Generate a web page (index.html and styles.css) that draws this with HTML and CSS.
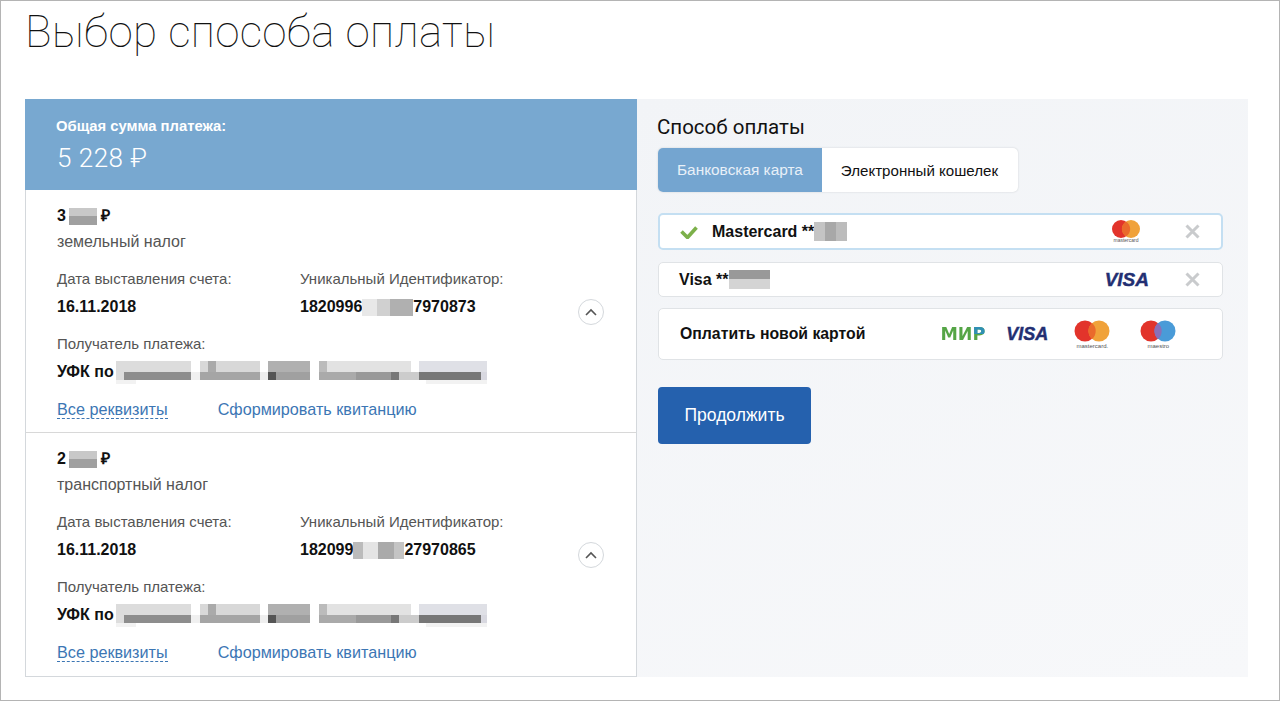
FILE: index.html
```html
<!DOCTYPE html>
<html>
<head>
  <title>Выбор способа оплаты</title>
  <link rel="stylesheet" href="styles.css">
</head>
<body>
  <div class="page">
    <h1 class="page-title">Выбор способа оплаты</h1>
    <div class="panel">
      <div class="bills">
        <div class="total">
          <div class="total-label">Общая сумма платежа:</div>
          <div class="total-sum">5 228 ₽</div>
        </div>

        <div class="bill">
          <div class="bill-sum">3 <span class="pix pix-sum"></span> ₽</div>
          <div class="bill-type">земельный налог</div>
          <div class="bill-fields">
            <div>
              <div class="field-label">Дата выставления счета:</div>
              <div class="field-value">16.11.2018</div>
            </div>
            <div>
              <div class="field-label">Уникальный Идентификатор:</div>
              <div class="field-value">1820996<span class="pix pix-id"></span>7970873</div>
            </div>
            <button class="toggle">
              <svg width="12" height="8" viewBox="0 0 12 8"><path d="M1 7l5-5 5 5" fill="none" stroke="#555" stroke-width="1.6"/></svg>
            </button>
          </div>
          <div class="field-label receiver-label">Получатель платежа:</div>
          <div class="field-value receiver">УФК по <span class="pix pix-long"></span></div>
          <div class="bill-links">
            <a class="link link-dashed">Все реквизиты</a>
            <a class="link">Сформировать квитанцию</a>
          </div>
        </div>

        <div class="bill">
          <div class="bill-sum">2 <span class="pix pix-sum"></span> ₽</div>
          <div class="bill-type">транспортный налог</div>
          <div class="bill-fields">
            <div>
              <div class="field-label">Дата выставления счета:</div>
              <div class="field-value">16.11.2018</div>
            </div>
            <div>
              <div class="field-label">Уникальный Идентификатор:</div>
              <div class="field-value">182099<span class="pix pix-id pix-id-wide"></span>27970865</div>
            </div>
            <button class="toggle">
              <svg width="12" height="8" viewBox="0 0 12 8"><path d="M1 7l5-5 5 5" fill="none" stroke="#555" stroke-width="1.6"/></svg>
            </button>
          </div>
          <div class="field-label receiver-label">Получатель платежа:</div>
          <div class="field-value receiver">УФК по <span class="pix pix-long"></span></div>
          <div class="bill-links">
            <a class="link link-dashed">Все реквизиты</a>
            <a class="link">Сформировать квитанцию</a>
          </div>
        </div>
      </div>

      <div class="method">
        <h2 class="method-title">Способ оплаты</h2>
        <div class="tabs">
          <div class="tab tab-active">Банковская карта</div>
          <div class="tab">Электронный кошелек</div>
        </div>

        <div class="card card-selected">
          <svg class="check" width="18" height="14" viewBox="0 0 18 14"><path d="M1.5 6.5l6 6 9-10" fill="none" stroke="#7cb04a" stroke-width="3.6"/></svg>
          <span class="card-name">Mastercard **<span class="pix pix-card"></span></span>
          <span class="logo logo-mc-small">
            <svg width="28" height="18" viewBox="0 0 28 18">
              <circle cx="9" cy="9" r="9" fill="#e2342b"/>
              <circle cx="19" cy="9" r="9" fill="#f0a23a"/>
              <path d="M14 1.4a9 9 0 0 1 0 15.2a9 9 0 0 1 0-15.2z" fill="#ea6a2c"/>
            </svg>
            <span class="logo-caption logo-caption-small">mastercard</span>
          </span>
          <svg class="remove" width="15" height="15" viewBox="0 0 15 15"><path d="M1.5 1.5l12 12M13.5 1.5l-12 12" stroke="#c9cbcd" stroke-width="3"/></svg>
        </div>

        <div class="card card-visa">
          <span class="card-name">Visa **<span class="pix pix-card pix-card-visa"></span></span>
          <span class="visa visa-small">VISA</span>
          <svg class="remove" width="15" height="15" viewBox="0 0 15 15"><path d="M1.5 1.5l12 12M13.5 1.5l-12 12" stroke="#c9cbcd" stroke-width="3"/></svg>
        </div>

        <div class="card card-new">
          <span class="card-name card-name-new">Оплатить новой картой</span>
          <span class="new-logos">
            <span class="mir">МИР</span>
            <span class="visa">VISA</span>
            <span class="logo">
              <svg width="36" height="22" viewBox="0 0 36 22">
                <circle cx="11" cy="11" r="10.5" fill="#e2342b"/>
                <circle cx="25" cy="11" r="10.5" fill="#f0a23a"/>
                <path d="M18 3a10.5 10.5 0 0 1 0 16a10.5 10.5 0 0 1 0-16z" fill="#ea6a2c"/>
              </svg>
              <span class="logo-caption">mastercard.</span>
            </span>
            <span class="logo">
              <svg width="36" height="22" viewBox="0 0 36 22">
                <circle cx="11" cy="11" r="10.5" fill="#e2342b"/>
                <circle cx="25" cy="11" r="10.5" fill="#4a9bd8"/>
                <path d="M18 3a10.5 10.5 0 0 1 0 16a10.5 10.5 0 0 1 0-16z" fill="#8a6fb8"/>
              </svg>
              <span class="logo-caption">maestro</span>
            </span>
          </span>
        </div>

        <button class="continue-btn">Продолжить</button>
      </div>
    </div>
  </div>
</body>
</html>
```

FILE: styles.css
```css
html, body {
  margin: 0;
  background-color: #fff;
}

.page {
  box-sizing: border-box;
  width: 1280px;
  height: 701px;
  border: 1px solid #b4b4b4;
  padding: 0 31px 0 24px;
  overflow: hidden;
  font-family: "Liberation Sans", Arial, sans-serif;
  color: #111;
}

.page-title {
  margin: 0;
  height: 98px;
  font-family: Roboto, sans-serif;
  font-weight: 100;
  font-size: 44px;
  line-height: 62px;
  letter-spacing: 0.3px;
  color: #111;
}

.panel {
  display: flex;
  height: 578px;
}

/* left column */
.bills {
  box-sizing: border-box;
  width: 612px;
  border: 1px solid #d4d8dc;
  border-top: none;
}

.total {
  box-sizing: border-box;
  height: 91px;
  margin: 0 -1px;
  padding: 19px 0 0 31px;
  background-color: #78a8d0;
  color: #fff;
}

.total-label {
  font-size: 14.8px;
  font-weight: bold;
  line-height: 16px;
}

.total-sum {
  margin-top: 9px;
  padding-left: 1px;
  font-family: Roboto, sans-serif;
  font-weight: 300;
  font-size: 26px;
  line-height: 30px;
  letter-spacing: 0.5px;
}

.bill {
  box-sizing: border-box;
  height: 243px;
  padding: 17px 0 0 31px;
  border-bottom: 1px solid #d8d8d8;
}

.bill:last-child {
  border-bottom: none;
  height: 244px;
}

.bill-sum {
  font-size: 16px;
  font-weight: bold;
  line-height: 18px;
  word-spacing: -1px;
}

.bill-type {
  margin-top: 8px;
  font-size: 16px;
  line-height: 18px;
  color: #555;
}

.bill-fields {
  display: grid;
  grid-template-columns: 243px 278px 26px;
  margin-top: 19px;
}

.field-label {
  font-size: 15px;
  line-height: 18px;
  color: #555;
}

.field-value {
  margin-top: 10px;
  font-size: 16px;
  font-weight: bold;
  line-height: 18px;
  white-space: nowrap;
}

.toggle {
  align-self: end;
  width: 26px;
  height: 26px;
  margin: 0 0 -9px 0;
  padding: 0;
  border: 1px solid #d4d8dc;
  border-radius: 50%;
  background-color: #fff;
  display: flex;
  align-items: center;
  justify-content: center;
}

.receiver-label {
  margin-top: 19px;
}

.receiver {
  margin-top: 8px;
}

.bill-links {
  display: flex;
  gap: 50px;
  margin-top: 16px;
}

.link {
  font-size: 16.2px;
  line-height: 18px;
  color: #3c76b4;
}

.link-dashed {
  border-bottom: 1px dashed #3c76b4;
}

/* pixelated pieces */
.pix {
  display: inline-block;
  vertical-align: -4px;
  height: 17px;
  filter: blur(0.5px);
}

.pix-sum {
  width: 28px;
  background: linear-gradient(#c8c8c8 0 45%, #a0a0a0 45% 100%);
}

.pix-id {
  width: 51px;
  background:
    linear-gradient(to right, #e8e8e8 0 30%, #d0d0d0 30% 55%, #b0b0b0 55% 100%);
}

.pix-id-wide {
  background:
    linear-gradient(to right, #bbb 0 20%, #e4e4e4 20% 50%, #aaa 50% 80%, #c4c4c4 80% 100%);
}

.pix-long {
  width: 371px;
  height: 23px;
  margin-left: -2px;
  vertical-align: -7px;
  background:
    linear-gradient(to right, #dcdcdc 0 75px, #fff 75px 84px, #d8d8d8 84px 92px, #aaa 92px 100px, #d8d8d8 100px 144px, #fff 144px 152px, #b0b0b0 152px 194px, #fff 194px 203px, #bbb 203px 211px, #e2e2e2 211px 295px, #fff 295px 303px, #dfe0e6 303px 371px) 0 0 / 100% 11px no-repeat,
    linear-gradient(to right, #ddd 0 8px, #8d8d8d 8px 75px, #f0f0f0 75px 84px, #a5a5a5 84px 144px, #eee 144px 152px, #555 152px 160px, #a0a0a0 160px 194px, #fff 194px 203px, #aaa 203px 240px, #999 240px 275px, #777 275px 283px, #ccc 283px 303px, #777 303px 365px, #d8d8e0 365px 371px) 0 11px / 100% 8px no-repeat,
    linear-gradient(to right, #f2f2f2 0 20px, #fff 20px 310px, #f2f2f2 310px 371px) 0 19px / 100% 4px no-repeat;
}

.pix-card {
  width: 33px;
  height: 19px;
  vertical-align: -4px;
  background: linear-gradient(to right, #c4c4c4 0 33%, #a8a8a8 33% 66%, #bcbcbc 66% 100%);
}

.pix-card-visa {
  width: 41px;
  background: linear-gradient(#999 0 50%, #d4d4d4 50% 100%);
}

/* right column */
.method {
  flex: 1;
  padding: 14px 25px 0 21px;
  background: linear-gradient(160deg, #f2f4f7, #f7f8fa);
}

.method-title {
  margin: 0 0 0 -1px;
  height: 35px;
  font-family: Roboto, sans-serif;
  font-weight: 400;
  font-size: 20.5px;
  line-height: 28px;
  color: #111;
}

.tabs {
  display: inline-flex;
  height: 44px;
  border-radius: 5px;
  background-color: #fff;
  box-shadow: 0 0 2px #c8ccd0;
  overflow: hidden;
}

.tab {
  display: flex;
  align-items: center;
  padding: 0 20px 0 19px;
  font-size: 15.1px;
  color: #111;
}

.tab-active {
  padding: 0 19px;
  font-size: 15.4px;
  background-color: #74a5d0;
  color: #e8f0f8;
}

.card {
  box-sizing: border-box;
  display: flex;
  align-items: center;
  width: 565px;
  margin-top: 11px;
  border: 1px solid #e0e3e6;
  border-radius: 5px;
  background-color: #fff;
}

.card-name {
  font-size: 16px;
  font-weight: bold;
}

.card-name-new {
  font-size: 15.8px;
}

.card-selected {
  height: 37px;
  margin-top: 21px;
  padding-left: 20px;
  border: 2px solid #c4dff2;
}

.check {
  margin-right: 14px;
}

.card-visa {
  height: 35px;
  margin-top: 12px;
  padding-left: 20px;
}

.card-new {
  height: 52px;
  padding-left: 21px;
}

.logo {
  display: inline-flex;
  flex-direction: column;
  align-items: center;
}

.logo-mc-small {
  margin: 0 45px 0 auto;
}

.logo-caption {
  font-family: "Liberation Sans", Arial, sans-serif;
  font-size: 6px;
  line-height: 8px;
  color: #555;
}

.logo-caption-small {
  font-size: 5px;
  line-height: 5px;
}

.remove {
  margin-right: 22px;
}

.card-selected .remove {
  margin-right: 21px;
}

.visa {
  font-family: "Liberation Sans", Arial, sans-serif;
  font-size: 18px;
  font-style: italic;
  font-weight: bold;
  color: #232f72;
  -webkit-text-stroke: 0.4px #232f72;
}

.visa-small {
  margin: 0 36px 0 auto;
  font-size: 19px;
}

.new-logos {
  display: flex;
  align-items: center;
  gap: 21px;
  margin-left: 75px;
}

.new-logos .logo {
  margin: 2px 0 0 5px;
}

.new-logos .logo + .logo {
  margin-left: 9px;
}

.mir {
  font-family: "DejaVu Sans", sans-serif;
  font-size: 17.5px;
  font-weight: bold;
  background:
    linear-gradient(to right, transparent 68%, #2f8fb5 68%) 0 0 / 100% 50% no-repeat,
    linear-gradient(#55a546, #55a546);
  -webkit-background-clip: text;
  background-clip: text;
  color: transparent;
}

.continue-btn {
  display: block;
  width: 153px;
  height: 57px;
  margin-top: 27px;
  border: none;
  border-radius: 4px;
  background-color: #2561ae;
  color: #fff;
  font-family: "Liberation Sans", Arial, sans-serif;
  font-size: 17.5px;
}
```
